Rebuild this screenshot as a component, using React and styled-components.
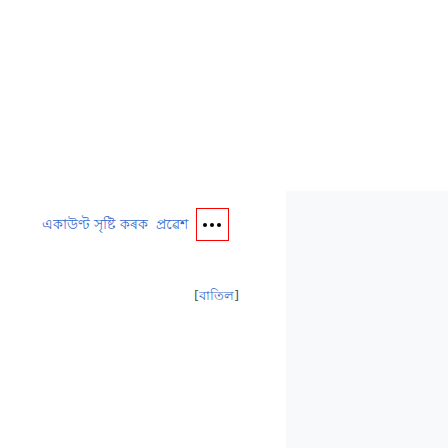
import React from "react";
import styled, { createGlobalStyle } from "styled-components";

const Global = createGlobalStyle`
  html, body { margin: 0; padding: 0; background: #fff; }
  body { font-family: "DejaVu Sans", sans-serif; font-size: 14px; }
`;

const Page = styled.div`
  width: 448px;
  height: 448px;
  padding-top: 191px;
  box-sizing: border-box;
  display: flex;
`;

const Main = styled.div`
  width: 286px;
  padding: 17px 0 0 42px;
  box-sizing: border-box;
  display: flex;
  flex-direction: column;
`;

const Side = styled.div`
  flex: 1;
  background: #f8f9fa;
`;

const Nav = styled.div`
  display: flex;
  align-items: center;
  height: 33px;
`;

const Link = styled.a`
  color: #3366cc;
  text-decoration: none;
  margin-right: ${(p) => p.$gap || 0}px;
  white-space: nowrap;
`;

const MoreButton = styled.button`
  width: 33px;
  height: 33px;
  box-sizing: border-box;
  border: 1px solid #ff0000;
  background: #fff;
  padding: 0;
  display: flex;
  align-items: center;
  justify-content: center;
  gap: 3px;
`;

const Dot = styled.span`
  width: 4px;
  height: 4px;
  border-radius: 50%;
  background: #000;
`;

const Cancel = styled.div`
  margin: 45px 0 0 152px;
  color: #54595d;
  font-size: 13px;
  white-space: nowrap;
`;

export default function App() {
  return (
    <>
      <Global />
      <Page>
        <Main>
          <Nav>
            <Link href="#" $gap={8}>একাউণ্ট সৃষ্টি কৰক</Link>
            <Link href="#" $gap={8}>প্ৰৱেশ</Link>
            <MoreButton aria-label="more">
              <Dot />
              <Dot />
              <Dot />
            </MoreButton>
          </Nav>
          <Cancel>
            [<Link href="#">বাতিল</Link>]
          </Cancel>
        </Main>
        <Side />
      </Page>
    </>
  );
}
